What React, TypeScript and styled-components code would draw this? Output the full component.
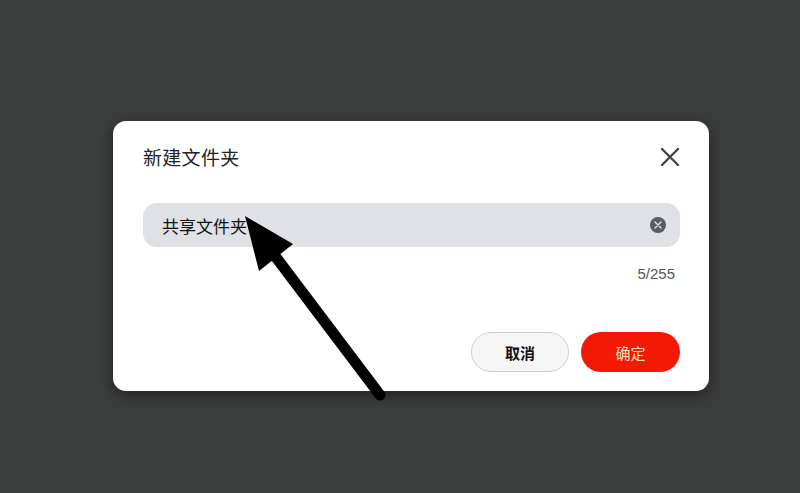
import React from "react";
import styled, { createGlobalStyle } from "styled-components";

const Global = createGlobalStyle`
  html, body { margin: 0; padding: 0; }
  body {
    background: #3b3c3c;
    font-family: "Noto Sans CJK SC", "Noto Sans", "Liberation Sans", sans-serif;
  }
`;

const Page = styled.div`
  position: relative;
  width: 800px;
  height: 493px;
  overflow: hidden;
  background: #3b3c3c;
  padding: 121px 0 0 113px;
  box-sizing: border-box;
`;

const Dialog = styled.div`
  width: 596px;
  height: 270px;
  box-sizing: border-box;
  background: #ffffff;
  border-radius: 13px;
  box-shadow: 0 4px 14px rgba(0, 0, 0, 0.45);
  padding: 24px 29px 19px 30px;
  display: flex;
  flex-direction: column;
`;

const Header = styled.div`
  display: flex;
  align-items: center;
  justify-content: space-between;
  height: 24px;
`;

const Title = styled.div`
  font-size: 19px;
  line-height: 24px;
  color: #222;
  letter-spacing: 0.3px;
`;

const CloseButton = styled.button`
  border: none;
  background: transparent;
  padding: 0;
  width: 22px;
  height: 22px;
  display: flex;
  align-items: center;
  justify-content: center;
  margin-right: -1px;
  cursor: pointer;
`;

const InputBox = styled.div`
  margin-top: 34px;
  height: 44px;
  border-radius: 14px;
  background: #e0e1e5;
  display: flex;
  align-items: center;
  padding: 0 14px 0 19px;
`;

const InputText = styled.div`
  flex: 1;
  font-size: 17px;
  color: #111;
`;

const ClearIcon = styled.div`
  width: 16px;
  height: 16px;
  border-radius: 50%;
  background: #5b5c5e;
  display: flex;
  align-items: center;
  justify-content: center;
`;

const Counter = styled.div`
  margin-top: 17px;
  text-align: right;
  padding-right: 5px;
  font-family: "Liberation Sans", Arial, sans-serif;
  font-size: 15px;
  line-height: 20px;
  color: #555;
`;

const Footer = styled.div`
  margin-top: auto;
  display: flex;
  justify-content: flex-end;
  gap: 12px;
`;

const Button = styled.button<{ $primary?: boolean }>`
  height: 40px;
  width: ${(p) => (p.$primary ? "99px" : "98px")};
  border-radius: 20px;
  font-family: "Noto Sans CJK SC", sans-serif;
  font-size: 15px;
  font-weight: ${(p) => (p.$primary ? 400 : 600)};
  box-sizing: border-box;
  border: ${(p) => (p.$primary ? "none" : "1px solid #cfcfcf")};
  background: ${(p) => (p.$primary ? "#f21a04" : "#f6f6f6")};
  color: ${(p) => (p.$primary ? "#fde2c8" : "#111")};
  cursor: pointer;
`;

const Overlay = styled.svg`
  position: absolute;
  left: 0;
  top: 0;
  pointer-events: none;
`;

export default function App() {
  return (
    <>
      <Global />
      <Page>
        <Dialog>
          <Header>
            <Title>新建文件夹</Title>
            <CloseButton aria-label="关闭">
              <svg width="20" height="18" viewBox="0 0 20 18">
                <path d="M2 1 L18 17 M18 1 L2 17" stroke="#444" strokeWidth="2.4" strokeLinecap="round" />
              </svg>
            </CloseButton>
          </Header>
          <InputBox>
            <InputText>共享文件夹</InputText>
            <ClearIcon>
              <svg width="8" height="8" viewBox="0 0 8 8">
                <path d="M1 1 L7 7 M7 1 L1 7" stroke="#e6e6e6" strokeWidth="1.4" strokeLinecap="round" />
              </svg>
            </ClearIcon>
          </InputBox>
          <Counter>5/255</Counter>
          <Footer>
            <Button>取消</Button>
            <Button $primary>确定</Button>
          </Footer>
        </Dialog>
        <Overlay width="800" height="493" viewBox="0 0 800 493">
          <path d="M272 252 L380 395" stroke="#000" strokeWidth="11" strokeLinecap="round" />
          <polygon points="245,216 293,244 259,271" fill="#000" />
        </Overlay>
      </Page>
    </>
  );
}
